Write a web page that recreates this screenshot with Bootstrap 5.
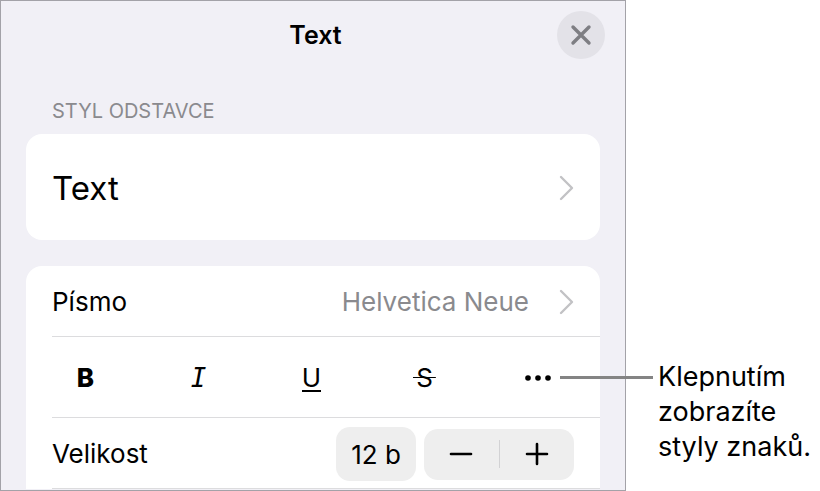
<!DOCTYPE html>
<html lang="cs">
<head>
<meta charset="utf-8">
<meta name="viewport" content="width=device-width, initial-scale=1">
<title>Text</title>
<link href="https://cdn.jsdelivr.net/npm/bootstrap@5.3.0/dist/css/bootstrap.min.css" rel="stylesheet">
<style>
body { font-family: Inter, "Liberation Sans", sans-serif; font-size: 26px; line-height: 34px; color: #000; background: #fff; }
.page-grid { display: grid; grid-template-columns: minmax(0, 1fr) 194px; min-height: 100vh; }
.panel { background: #f1f0f6; border: 1px solid #a3a2a8; padding: 0 25px; }
.panel-head { display: grid; grid-template-columns: 48px 1fr 48px; padding-top: 10px; margin-right: -5px; }
.panel-title { grid-column: 2; font-size: 25px; line-height: 48px; font-weight: 600; }
.close-btn { width: 48px; height: 48px; background: #e3e2e8; }
.group-label { font-size: 20px; line-height: 28px; color: #8a8a8e; margin: 38px 0 9px; padding-left: 26px; font-weight: 400; }
.group-card { background: #fff; border-radius: 16px; }
.group-card + .group-card { margin-top: 26px; border-radius: 16px 16px 0 0; }
.group-card button { color: #000; }
.line-row { padding: 2px 26px 0; min-height: 70px; font-size: 26px; line-height: 34px; }
.style-row { min-height: 106px; font-size: 33px; }
.line-row .value { color: #8a8a8e; margin-right: 30px; }
.rule { height: 1px; margin-left: 26px; background: #dcdcde; }
.formats { padding: 0 6px 0 3px; height: 80px; }
.fmt { font-size: 26px; line-height: 34px; }
.fmt-bold { font-weight: 800; }
.fmt-italic { font-family: "DejaVu Sans Mono", monospace; font-style: italic; }
.fmt-under span { border-bottom: 2px solid #000; line-height: 24px; display: inline-block; }
.fmt-strike span { background: linear-gradient(#000, #000) center / 100% 1px no-repeat; padding: 0 3px; }
.leader { position: absolute; left: calc(50% + 22px); top: 50%; width: 93px; height: 3px; margin-top: -1px; background: #848484; z-index: 2; }
.size-box { border-radius: 14px; background: #eee; height: 54px; width: 80px; font-size: 26px; }
.stepper { border-radius: 14px; background: #eee; height: 51px; width: 150px; }
.stepper-mid { width: 1px; height: 28px; background: #d2d2d4; }
.note { padding: 0 0 27px 32px; line-height: 35px; font-size: 27px; }
</style>
<script src="https://cdn.jsdelivr.net/npm/bootstrap@5.3.0/dist/js/bootstrap.bundle.min.js"></script>
</head>
<body>
<div class="page-grid">
  <main class="panel">
    <header class="panel-head">
      <h1 class="panel-title text-center m-0">Text</h1>
      <button type="button" class="close-btn btn rounded-circle border-0 p-0 d-flex align-items-center justify-content-center" aria-label="Zavřít">
        <svg width="24" height="24" viewBox="0 0 24 24" fill="none" stroke="#7e7e83" stroke-width="3.4" stroke-linecap="round"><path d="M4 4l16 16M20 4L4 20"/></svg>
      </button>
    </header>
    <h2 class="group-label">STYL ODSTAVCE</h2>
    <section class="group-card">
      <button type="button" class="line-row style-row btn border-0 w-100 d-flex align-items-center justify-content-between">
        <span>Text</span>
        <svg width="15" height="26" viewBox="0 0 15 26" fill="none" stroke="#c2c2c5" stroke-width="2.4" stroke-linecap="round" stroke-linejoin="round"><path d="M2 2l11 11L2 24"/></svg>
      </button>
    </section>
    <section class="group-card">
      <button type="button" class="line-row btn border-0 w-100 d-flex align-items-center">
        <span>Písmo</span>
        <span class="value ms-auto">Helvetica Neue</span>
        <svg width="15" height="26" viewBox="0 0 15 26" fill="none" stroke="#c2c2c5" stroke-width="2.4" stroke-linecap="round" stroke-linejoin="round"><path d="M2 2l11 11L2 24"/></svg>
      </button>
      <div class="rule"></div>
      <div class="formats row g-0 align-items-center text-center">
        <div class="col"><button type="button" class="fmt fmt-bold btn border-0 p-0">B</button></div>
        <div class="col"><button type="button" class="fmt fmt-italic btn border-0 p-0">I</button></div>
        <div class="col"><button type="button" class="fmt fmt-under btn border-0 p-0"><span>U</span></button></div>
        <div class="col"><button type="button" class="fmt fmt-strike btn border-0 p-0"><span>S</span></button></div>
        <div class="col position-relative">
          <button type="button" class="fmt btn border-0 p-0" aria-label="Další styly">
            <svg class="d-block" width="28" height="34" viewBox="0 0 28 34"><circle cx="4" cy="17" r="2.8"/><circle cx="14" cy="17" r="2.8"/><circle cx="24" cy="17" r="2.8"/></svg>
          </button>
          <span class="leader"></span>
        </div>
      </div>
      <div class="rule"></div>
      <div class="line-row d-flex align-items-center">
        <span>Velikost</span>
        <button type="button" class="size-box btn border-0 p-0 ms-auto">12 b</button>
        <div class="stepper d-flex align-items-center ms-2">
          <button type="button" class="btn border-0 p-0 flex-fill" aria-label="Zmenšit"><svg class="d-block mx-auto" width="24" height="24" viewBox="0 0 24 24" stroke="#000" stroke-width="2.6" stroke-linecap="round"><path d="M2 12h20"/></svg></button>
          <span class="stepper-mid"></span>
          <button type="button" class="btn border-0 p-0 flex-fill" aria-label="Zvětšit"><svg class="d-block mx-auto" width="24" height="24" viewBox="0 0 24 24" stroke="#000" stroke-width="2.6" stroke-linecap="round"><path d="M2 12h20M12 2v20"/></svg></button>
        </div>
      </div>
      <div class="rule"></div>
    </section>
  </main>
  <aside class="note d-flex align-items-end"><p class="m-0">Klepnutím zobrazíte<br>styly znaků.</p></aside>
</div>
</body>
</html>
